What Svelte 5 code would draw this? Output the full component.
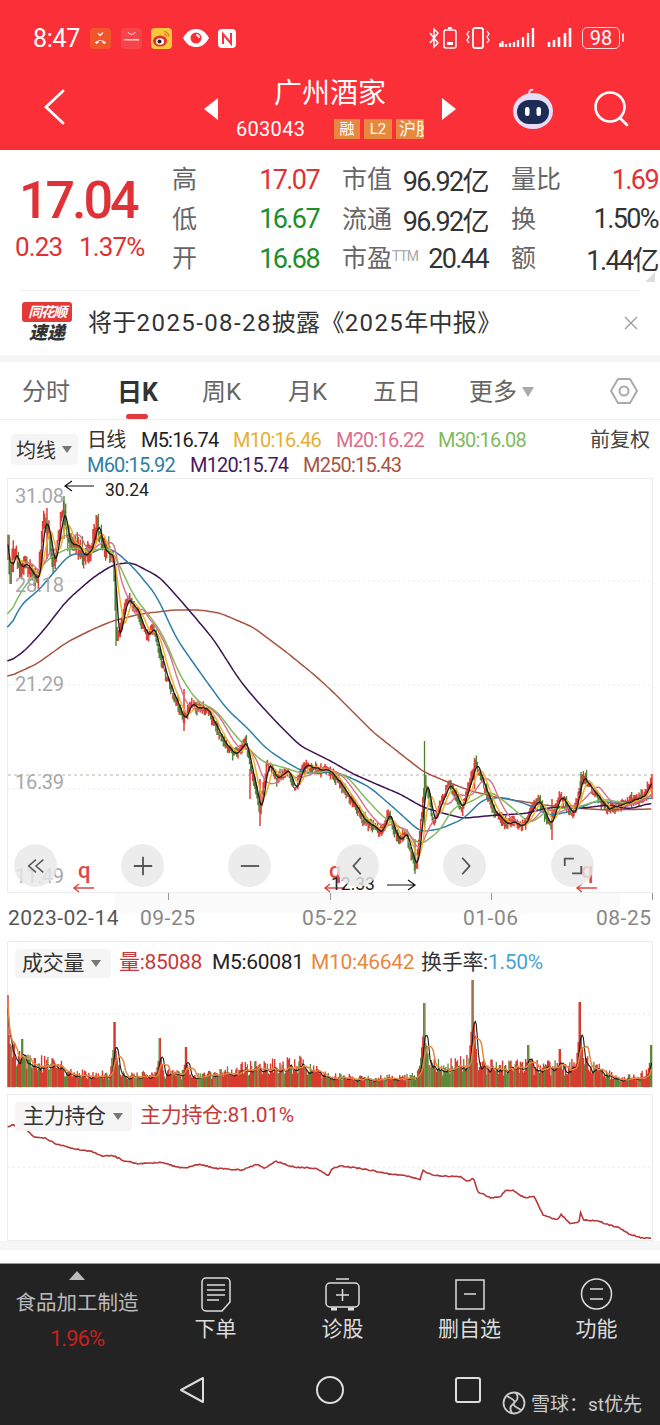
<script>
  // seeded random so the chart stays the same between runs
  let seed = 7321;
  const rnd = () => {
    seed = (seed * 16807) % 2147483647;
    return seed / 2147483647;
  };

  const z3 = pts => pts.map(([x, y]) => [x / 3, 480 + y / 3]);
  const z4 = pts => pts.map(([x, y]) => [330 + x / 3, 480 + y / 3]);
  const zs = pts => pts.map(([x, y]) => [x / 2.376, 930 + y / 3]);

  const interp = (keys, x) => {
    if (x <= keys[0][0]) return keys[0][1];
    for (let i = 1; i < keys.length; i++) {
      if (x <= keys[i][0]) {
        const [x0, y0] = keys[i - 1];
        const [x1, y1] = keys[i];
        return y0 + ((y1 - y0) * (x - x0)) / (x1 - x0 || 1);
      }
    }
    return keys[keys.length - 1][1];
  };

  const toPath = pts => 'M' + pts.map(p => p[0].toFixed(1) + ' ' + p[1].toFixed(1)).join('L');

  // resample and round off the corners of a hand-read line
  const smooth = (keys, win = 3) => {
    const raw = [];
    for (let x = keys[0][0]; x <= keys[keys.length - 1][0]; x += 2) raw.push([x, interp(keys, x)]);
    return toPath(raw.map((p, i) => {
      const part = raw.slice(Math.max(0, i - win), i + win + 1);
      return [p[0], part.reduce((s, q) => s + q[1], 0) / part.length];
    }));
  };

  const m250 = smooth([
    ...z3([[22,595],[110,555],[200,490],[280,450],[340,425],[420,405],[520,393],[600,393],[660,402],[760,445],[860,520],[940,585]]),
    ...z4([[0,630],[60,690],[130,760],[200,815],[280,878],[350,908],[420,935],[500,955],[580,968],[660,980],[750,988],[830,993],[968,990]])
  ]);
  const m120 = smooth([
    ...z3([[22,552],[75,515],[130,455],[200,365],[280,295],[340,257],[395,250],[480,295],[560,385],[640,480],[720,605],[770,665],[830,730],[900,800]]),
    ...z4([[0,845],[70,885],[150,920],[210,945],[280,985],[330,1000],[400,1018],[480,1010],[590,1003],[660,985],[750,988],[830,978],[900,990],[968,970]])
  ]);
  const m60 = smooth([
    ...z3([[22,465],[60,380],[120,330],[170,270],[210,225],[270,225],[310,205],[345,215],[400,265],[470,350],[530,480],[600,580],[680,690],[740,745],[800,810],[860,850],[910,878],[960,885]]),
    ...z4([[0,875],[60,895],[120,925],[190,985],[270,1058],[330,1050],[400,1020],[460,960],[520,955],[590,975],[660,1010],[730,995],[800,965],[880,975],[968,955]])
  ]);
  const m30 = smooth([
    ...z3([[22,425],[60,340],[110,280],[150,235],[210,205],[270,215],[330,205],[355,250],[400,350],[460,425],[490,470],[540,590],[590,665],[650,695],[710,775],[790,850],[850,865],[910,885]]),
    ...z4([[0,875],[50,890],[100,950],[160,1015],[220,1050],[270,1100],[330,1055],[370,985],[420,970],[480,935],[540,980],[600,1035],[660,990],[740,985],[820,960],[900,975],[968,945]])
  ]);

  const closeKeys = [
    ...z3([[22,170],[30,300],[40,215],[60,265],[75,250],[100,290],[115,300],[130,120],[145,150],[160,260],[190,90],[205,190],[230,200],[250,230],[270,220],[290,130],[310,210],[340,240],[350,490],[380,360],[410,400],[440,470],[460,450],[490,570],[520,650],[550,720],[570,680],[620,690],[660,770],[700,830],[735,790],[780,1000],[800,850],[830,900],[860,870],[885,930],[910,860],[960,870]]),
    ...z4([[0,880],[60,960],[100,1020],[150,1060],[175,1000],[205,1090],[225,1060],[258,1170],[285,900],[310,1030],[355,910],[395,990],[435,850],[490,1000],[520,1030],[580,1040],[620,960],[660,1040],[690,950],[730,1010],[755,890],[800,950],[830,990],[880,975],[940,950],[968,895]])
  ];

  const bars = [];
  for (let x = 8; x < 652; x += 1.05) {
    const wild = x < 110 ? 3 : 1.5;
    const c = interp(closeKeys, x) + (rnd() - 0.5) * 5;
    const prev = bars.length ? bars[bars.length - 1].c : c + 2;
    const o = prev + (rnd() - 0.5) * 3 * wild;
    const hi = Math.min(o, c) - rnd() * 4 * wild;
    const lo = Math.max(o, c) + rnd() * 4 * wild;
    bars.push({ x, c, o, hi, lo, up: c < o + 2.5 });
  }

  // the long shadows that stand out on the picture
  const spikes = [
    [424.5, 742, 830, false], [552, 800, 841, true], [260, 780, 827, true], [415, 840, 875, false],
    [474.5, 759, 790, true], [581, 773, 800, false], [64, 497, 540, false], [47, 509, 560, true],
    [116, 590, 647, false], [184, 690, 732, true], [250, 770, 800, true], [652, 775, 800, true]
  ];

  const candlePath = up => {
    let d = '';
    for (const b of bars) {
      if (b.up === up) d += `M${b.x.toFixed(1)} ${b.hi.toFixed(1)}V${b.lo.toFixed(1)}`;
    }
    for (const s of spikes) {
      if (s[3] === up) d += `M${s[0]} ${s[1]}V${s[2]}`;
    }
    return d;
  };
  const redCandles = candlePath(true);
  const greenCandles = candlePath(false);

  const movAvg = (vals, n) => bars.map((b, i) => {
    const part = vals.slice(Math.max(0, i - n + 1), i + 1);
    return [b.x, part.reduce((s, v) => s + v, 0) / part.length];
  });
  const ma5 = toPath(movAvg(bars.map(b => b.c), 5));
  const ma10 = toPath(movAvg(bars.map(b => b.c), 10));
  const ma20 = toPath(movAvg(bars.map(b => b.c), 20));

  // volume pane
  const volEnv = [[7,50],[20,30],[60,24],[70,17],[110,13],[115,22],[130,12],[160,17],[200,12],[240,21],[262,24],[300,26],[330,13],[380,10],[415,12],[424,40],[440,22],[470,30],[480,26],[500,22],[520,24],[570,22],[580,30],[600,19],[620,9],[640,13],[652,22]];
  const volPeaks = [[7.5,92],[114.5,65],[160,49],[424,84],[473,107],[580,85],[651,42],[22,48],[186,40],[528,42],[560,38]];
  const vols = bars.map(b => {
    let h = interp(volEnv, b.x) * (0.5 + rnd() * 0.7);
    for (const [px, ph] of volPeaks) {
      const d = Math.abs(b.x - px);
      if (d < 5) h = Math.max(h, ph * (d < 1 ? 1 : 0.75 - d * 0.12));
    }
    return h;
  });
  const volBars = bars.map((b, i) => ({
    x: b.x,
    h: vols[i],
    green: (b.x > 424 && b.x < 470 ? rnd() < 0.65 : rnd() < 0.22)
  }));
  const volPath = green => volBars.filter(v => v.green === green).map(v => `M${v.x.toFixed(1)} 1087V${(1087 - v.h).toFixed(1)}`).join('');
  const volRed = volPath(false);
  const volGreen = volPath(true);
  const volMa = n => toPath(movAvg(vols, n).map(p => [p[0], 1087 - p[1] * (n === 5 ? 0.85 : 0.9)]));
  const volM5 = volMa(5);
  const volM10 = volMa(10);

  // holdings line, read off the reference
  const holdKeys = zs([[18,590],[30,585],[60,595],[80,620],[110,625],[130,640],[170,655],[220,665],[240,677],[270,677],[290,690],[330,702],[385,697],[420,712],[445,713],[475,702],[510,715],[575,720],[610,703],[630,715],[655,693],[700,712],[750,714],[780,738],[790,715],[810,708],[860,716],[930,733],[960,737],[1000,748],[1003,720],[1030,737],[1095,740],[1110,755],[1125,745],[1135,785],[1165,803],[1190,800],[1200,780],[1220,782],[1245,803],[1270,800],[1290,855],[1325,870],[1332,853],[1355,880],[1375,878],[1380,845],[1385,870],[1420,872],[1440,882],[1470,893],[1495,912],[1530,925],[1548,923]]);
  const holdPts = [];
  for (let x = holdKeys[0][0]; x <= holdKeys[holdKeys.length - 1][0]; x += 1.5) {
    holdPts.push([x, interp(holdKeys, x) + (rnd() - 0.5) * 1.1]);
  }
  const holdPath = toPath(holdPts);

  const stats = [
    [{ l: '高', v: '17.07', c: 'red' }, { l: '市值', v: '96.92亿' }, { l: '量比', v: '1.69', c: 'red' }],
    [{ l: '低', v: '16.67', c: 'green' }, { l: '流通', v: '96.92亿' }, { l: '换', v: '1.50%' }],
    [{ l: '开', v: '16.68', c: 'green' }, { l: '市盈', ttm: true, v: '20.44' }, { l: '额', v: '1.44亿' }]
  ];
  const tabs = ['分时', '日K', '周K', '月K', '五日'];
  const priceLabels = [['31.08', 496], ['28.18', 585], ['21.29', 684], ['16.39', 782], ['11.49', 876]];
  const markers = [84, 335, 587];
</script>

<div class="page">
  <header class="top">
    <div class="status">
      <span class="clock">8:47</span>
      <svg class="appicon" viewBox="0 0 21 21"><rect width="21" height="21" rx="4" fill="#f2552c"/><path d="M5 14.500c3-3 8-3 11 0l-1.500 1.500-2-1.200v-1.500c-1.200-.3-2.800-.3-4 0v1.500l-2 1.200z" fill="#fff"/><path d="M8 5l2 2.500 3-3" fill="none" stroke="#fff" stroke-width="1.200"/></svg>
      <svg class="appicon" viewBox="0 0 21 21"><rect width="21" height="21" rx="4" fill="#f7434a"/><path d="M7 4c.5 3 6.500 3 7 0" fill="none" stroke="#fff" stroke-width=".8"/><rect x="3" y="11" width="15" height="1.600" fill="#fff" opacity=".7"/></svg>
      <svg class="appicon" viewBox="0 0 21 21"><rect width="21" height="21" rx="4" fill="#f9c73c"/><ellipse cx="9" cy="13" rx="7" ry="5.500" fill="#e5312d"/><ellipse cx="9" cy="13.500" rx="4" ry="3.300" fill="#fff"/><circle cx="8.500" cy="13.500" r="2" fill="#222"/><path d="M13 3.500a5 5 0 0 1 5 5M13 6a2.500 2.500 0 0 1 2.500 2.500" fill="none" stroke="#e5812d" stroke-width="1.400"/></svg>
      <svg class="eye" viewBox="0 0 28 20"><path d="M1 10C5 3 9 1 14 1s9 2 13 9c-4 7-8 9-13 9S5 17 1 10z" fill="#fff"/><circle cx="14" cy="10" r="5.500" fill="#fb2f38"/><path d="M14 6a4 4 0 0 1 4 4c-2 0-4-2-4-4z" fill="#fff"/></svg>
      <svg class="nfc" viewBox="0 0 20 21"><rect x="1" y="1" width="18" height="19" rx="4" fill="#fff"/><path d="M6 16V6l8 9.500V5" fill="none" stroke="#fb2f38" stroke-width="2"/></svg>
      <span class="spacer"></span>
      <svg class="st st1" viewBox="0 0 29 22"><path d="M1 6l8 10-4 4V2l4 4-8 10" fill="none" stroke="#fff" stroke-width="1.500"/><rect x="15" y="3" width="12" height="18" rx="2" fill="none" stroke="#fff" stroke-width="1.500"/><rect x="19" y="0" width="4" height="2" fill="#fff"/><rect x="18" y="15" width="6" height="3" fill="#fff"/></svg>
      <svg class="st st2" viewBox="0 0 25 22"><rect x="7" y="1" width="10" height="20" rx="2" fill="none" stroke="#fff" stroke-width="1.800"/><path d="M3 4l-2 3 2 3-2 3 2 3M21 4l2 3-2 3 2 3-2 3" fill="none" stroke="#fff" stroke-width="1.300"/></svg>
      <svg class="st st3" viewBox="0 0 36 22"><path d="M1 16v4M3.500 14v6M7 17v3M11 16v4M15 15v5M19 13v7M24 10v10M29 6v14M34 1v19" stroke="#fff" stroke-width="2.300" fill="none"/></svg>
      <svg class="st st4" viewBox="0 0 26 22"><path d="M2 15v5M7 13v7M12 10v10M18 6v14M23 1v19" stroke="#fff" stroke-width="2.600" fill="none"/></svg>
      <span class="batt"><span>98</span></span>
    </div>
    <div class="nav">
      <svg class="back" viewBox="0 0 22 36"><path d="M20 2L3 18l17 16" fill="none" stroke="#fff" stroke-width="2.800" stroke-linecap="round"/></svg>
      <span class="tri left"></span>
      <div class="titlebox">
        <div class="title">广州酒家</div>
        <div class="code">
          <span class="num">603043</span>
          <span class="badges"><i>融</i><i>L2</i><i>沪股</i></span>
        </div>
      </div>
      <span class="tri right"></span>
      <svg class="robot" viewBox="0 0 42 42">
        <path d="M18 7c-2-4 1-6 3-5" fill="none" stroke="#e9dcf5" stroke-width="2"/>
        <ellipse cx="21" cy="23" rx="20" ry="18" fill="#e6dcf7"/>
        <rect x="5" y="12" width="32" height="24" rx="12" fill="#1c2c55"/>
        <rect x="13" y="19" width="4.500" height="9" rx="2.200" fill="#fff"/>
        <rect x="24.500" y="19" width="4.500" height="9" rx="2.200" fill="#fff"/>
      </svg>
      <svg class="search" viewBox="0 0 36 36"><circle cx="17" cy="16" r="14.500" fill="none" stroke="#fff" stroke-width="2.600"/><path d="M27 27l7 7" stroke="#fff" stroke-width="2.800" stroke-linecap="round"/></svg>
    </div>
  </header>

  <section class="quote">
    <div class="price">
      <div class="big">17.04</div>
      <div class="chg"><span>0.23</span><span>1.37%</span></div>
    </div>
    <div class="stats">
      {#each stats as row}
        {#each row as s}
          <div class="cell">
            <span class="lab">{s.l}{#if s.ttm}<small>TTM</small>{/if}</span>
            <span class="val {s.c || ''}">{s.v}</span>
          </div>
        {/each}
      {/each}
    </div>
    <span class="corner"></span>
  </section>

  <section class="news">
    <div class="logo">
      <div class="logo-top">同花顺</div>
      <div class="logo-bot">速递</div>
    </div>
    <span class="news-text">将于<span class="date">2025-08-28</span>披露《<span class="date">2025</span>年中报》</span>
    <svg class="close" viewBox="0 0 14 14"><path d="M1 1l12 12M13 1L1 13" stroke="#999" stroke-width="1.300"/></svg>
  </section>
  <div class="band"></div>

  <nav class="tabs">
    {#each tabs as t, i}
      <span class="tab" class:active={i === 1}>{t}</span>
    {/each}
    <span class="tab more">更多<i></i></span>
    <svg class="hex" viewBox="0 0 28 28"><path d="M8 2h12l7 12-7 12H8L1 14z" fill="none" stroke="#aaa" stroke-width="2" stroke-linejoin="round"/><circle cx="14" cy="14" r="4.500" fill="none" stroke="#aaa" stroke-width="2"/></svg>
  </nav>

  <section class="legend">
    <div class="drop ma">均线<i></i></div>
    <div class="rows">
      <div class="row1">
        <span>日线</span>
        <span class="k">M5:16.74</span>
        <span class="m10">M10:16.46</span>
        <span class="m20">M20:16.22</span>
        <span class="m30">M30:16.08</span>
        <span class="fq">前复权</span>
      </div>
      <div class="row2">
        <span class="m60">M60:15.92</span>
        <span class="m120">M120:15.74</span>
        <span class="m250">M250:15.43</span>
      </div>
    </div>
  </section>

  <section class="chart">
    <svg class="plot" viewBox="0 479 660 415">
      <rect x="7.500" y="479.500" width="645" height="414" fill="#fff" stroke="#ececec"/>
      <path d="M8 582H652M8 686H652M8 790H652" stroke="#eaeaea" stroke-dasharray="2 3"/>
      <path d="M8 776H652" stroke="#b9b5a0" stroke-dasharray="3 3"/>
      <path d={redCandles} stroke="#de4037" stroke-width="1.500" fill="none"/>
      <path d={greenCandles} stroke="#4d7f33" stroke-width="1.300" fill="none"/>
      <path d={m250} stroke="#a85443" stroke-width="1.500" fill="none"/>
      <path d={m120} stroke="#3b1350" stroke-width="1.500" fill="none"/>
      <path d={m60} stroke="#2f7ea6" stroke-width="1.500" fill="none"/>
      <path d={m30} stroke="#7fbb5c" stroke-width="1.500" fill="none"/>
      <path d={ma20} stroke="#dd6c8a" stroke-width="1.400" fill="none"/>
      <path d={ma10} stroke="#efb02a" stroke-width="1.500" fill="none"/>
      <path d={ma5} stroke="#1a1a1a" stroke-width="1.300" fill="none"/>
      <path d="M94 487H65M72 482l-7 5 7 5" stroke="#111" stroke-width="1.200" fill="none"/>
      <path d="M387 886H415M408 881l7 5-7 5" stroke="#111" stroke-width="1.200" fill="none"/>
      {#each markers as m}
        <path d="M{m + 10} 889H{m - 10}M{m - 5} 885l-5 4 5 4" stroke="#dd4a44" stroke-width="1.500" fill="none"/>
      {/each}
    </svg>
    {#each priceLabels as [t, y]}
      <span class="plabel" style="top:{y - 479 - 12}px">{t}</span>
    {/each}
    {#each markers as m}
      <span class="q" style="left:{m - 6}px">q</span>
    {/each}
    <span class="note hi">30.24</span>
    <span class="note lo">12.33</span>
    <button class="round b1" aria-label="back"><svg viewBox="0 0 24 24"><path d="M12 5l-8 7 8 7M20 5l-8 7 8 7" fill="none" stroke="#555" stroke-width="1.600"/></svg></button>
    <button class="round b2" aria-label="zoom in"><svg viewBox="0 0 24 24"><path d="M2 12h20M12 2v20" stroke="#555" stroke-width="2"/></svg></button>
    <button class="round b3" aria-label="zoom out"><svg viewBox="0 0 24 24"><path d="M2 12h20" stroke="#555" stroke-width="2"/></svg></button>
    <button class="round b4" aria-label="left"><svg viewBox="0 0 24 24"><path d="M15 3l-8 9 8 9" fill="none" stroke="#555" stroke-width="2"/></svg></button>
    <button class="round b5" aria-label="right"><svg viewBox="0 0 24 24"><path d="M9 3l8 9-8 9" fill="none" stroke="#555" stroke-width="2"/></svg></button>
    <button class="round b6" aria-label="full"><svg viewBox="0 0 24 24"><path d="M13 4H3v8M11 20h10v-8" fill="none" stroke="#555" stroke-width="2"/></svg></button>
  </section>

  <div class="axis">
    <span class="smudge"></span>
    <i class="tick t1"></i><i class="tick t2"></i><i class="tick t3"></i><i class="tick t4"></i>
    <span class="first">2023-02-14</span><span>09-25</span><span>05-22</span><span>01-06</span><span>08-25</span>
  </div>

  <section class="pane vol">
    <svg class="plot" viewBox="0 941 660 147">
      <rect x="7.500" y="941.500" width="645" height="146" fill="#fff" stroke="#ececec"/>
      <path d="M8 1014H652" stroke="#e8e8e8" stroke-dasharray="2 3"/>
      <path d={volRed} stroke="#d93a2e" stroke-width="1.400" fill="none"/>
      <path d={volGreen} stroke="#5b8a3b" stroke-width="1.300" fill="none"/>
      <path d={volM5} stroke="#1a1a1a" stroke-width="1.100" fill="none"/>
      <path d={volM10} stroke="#e8873f" stroke-width="1.500" fill="none"/>
    </svg>
    <div class="pane-head">
      <div class="drop v">成交量<i></i></div>
      <span class="r1">量:85088</span>
      <span class="r2">M5:60081</span>
      <span class="r3">M10:46642</span>
      <span class="r4">换手率:<b>1.50%</b></span>
    </div>
  </section>

  <section class="pane hold">
    <svg class="plot" viewBox="0 1094 660 147">
      <rect x="7.500" y="1094.500" width="645" height="146" fill="#fff" stroke="#ececec"/>
      <path d="M8 1167H652" stroke="#e8e8e8" stroke-dasharray="2 3"/>
      <path d={holdPath} stroke="#b8393a" stroke-width="1.600" fill="none"/>
    </svg>
    <div class="pane-head">
      <div class="drop h">主力持仓<i></i></div>
      <span class="r5">主力持仓:81.01%</span>
    </div>
  </section>
  <div class="band2"></div>

  <footer class="bottom">
    <div class="tools">
      <div class="sector">
        <span class="up"></span>
        <span class="sname">食品加工制造</span>
        <span class="spct">1.96%</span>
      </div>
      <div class="tool">
        <svg width="30" height="35" viewBox="0 0 30 35"><path d="M5 1h20a4 4 0 0 1 4 4v20l-8 9H5a4 4 0 0 1-4-4V5a4 4 0 0 1 4-4z" fill="none" stroke="#ddd" stroke-width="1.500"/><path d="M6 8h18M6 13h18M6 18h18M6 23h12" stroke="#ddd" stroke-width="1.500"/></svg>
        <span>下单</span>
      </div>
      <div class="tool">
        <svg width="35" height="35" viewBox="0 0 35 35"><path d="M11 2h13" stroke="#ddd" stroke-width="1.500"/><rect x="1" y="6" width="33" height="24" rx="4" fill="none" stroke="#ddd" stroke-width="1.500"/><path d="M11 18h13M17.500 12v12" stroke="#ddd" stroke-width="1.500"/><path d="M6 32h6M23 32h6" stroke="#ddd" stroke-width="3"/></svg>
        <span>诊股</span>
      </div>
      <div class="tool">
        <svg width="30" height="35" viewBox="0 0 30 35"><rect x="1" y="3" width="28" height="29" fill="none" stroke="#ddd" stroke-width="1.500"/><path d="M9 17h12" stroke="#ddd" stroke-width="1.500"/></svg>
        <span>删自选</span>
      </div>
      <div class="tool">
        <svg width="33" height="35" viewBox="0 0 33 35"><circle cx="16.500" cy="17" r="15" fill="none" stroke="#ddd" stroke-width="1.500"/><path d="M10 12h13M10 22h13" stroke="#ddd" stroke-width="1.500"/></svg>
        <span>功能</span>
      </div>
    </div>
    <div class="sysnav">
      <svg width="26" height="28" viewBox="0 0 26 28"><path d="M24 2v24L2 14z" fill="none" stroke="#ddd" stroke-width="2" stroke-linejoin="round"/></svg>
      <svg width="28" height="28" viewBox="0 0 28 28"><ellipse cx="14" cy="14" rx="13" ry="13" fill="none" stroke="#ddd" stroke-width="2"/></svg>
      <svg width="26" height="26" viewBox="0 0 26 26"><rect x="1" y="1" width="24" height="24" rx="2" fill="none" stroke="#ddd" stroke-width="2"/></svg>
    </div>
    <div class="mark">
      <svg width="24" height="24" viewBox="0 0 24 24"><circle cx="12" cy="12" r="10.500" fill="none" stroke="#ccc" stroke-width="1.800"/><path d="M5 5c5 3 10 5 6 8s-3 6-1 9M19 19c-5-3-10-5-6-8s3-6 1-9" fill="none" stroke="#ccc" stroke-width="1.800"/></svg>
      <span>雪球：st优先</span>
    </div>
  </footer>
</div>

<style>
  :global(body) {
    margin: 0;
    background: #fff;
  }

  .page {
    position: relative;
    width: 660px;
    height: 1425px;
    overflow: hidden;
    background: #fff;
    color: #333;
    font-family: Roboto, "Noto Sans CJK SC", sans-serif;
  }

  .top {
    height: 150px;
    background: #fb2f38;
    color: #fff;
  }

  .status {
    display: flex;
    align-items: center;
    height: 76px;
    padding: 0 40px 0 33px;
    box-sizing: border-box;
  }
  .clock {
    width: 57px;
    font-size: 25px;
    letter-spacing: -0.3px;
  }
  .appicon {
    width: 21px;
    height: 21px;
    margin-right: 9.500px;
  }
  .eye {
    width: 28px;
    height: 20px;
    margin-right: 7px;
  }
  .nfc {
    width: 20px;
    height: 21px;
  }
  .spacer {
    flex: 1;
  }
  .st {
    height: 22px;
  }
  .st1 { width: 29px; margin-right: 8px; }
  .st2 { width: 25px; margin-right: 8px; }
  .st3 { width: 36px; margin-right: 12px; }
  .st4 { width: 26px; margin-right: 9px; }
  .batt {
    position: relative;
    display: flex;
    align-items: center;
    justify-content: center;
    width: 38px;
    height: 22px;
    box-sizing: border-box;
    border: 1.500px solid #ffd5d5;
    border-radius: 5px;
    font-size: 20px;
  }
  .batt::after {
    content: '';
    position: absolute;
    right: -5px;
    top: 5px;
    width: 2px;
    height: 9px;
    border-radius: 1px;
    background: #ffd5d5;
  }

  .nav {
    position: relative;
    display: flex;
    justify-content: center;
    height: 74px;
  }
  .back {
    position: absolute;
    left: 43px;
    top: 13px;
    width: 22px;
    height: 36px;
  }
  .tri {
    width: 0;
    height: 0;
    margin-top: 22px;
    border-top: 11px solid transparent;
    border-bottom: 11px solid transparent;
  }
  .tri.left {
    border-right: 14px solid #fff;
  }
  .tri.right {
    border-left: 14px solid #fff;
  }
  .titlebox {
    width: 224px;
  }
  .title {
    text-align: center;
    font-size: 28px;
    line-height: 36px;
  }
  .code {
    display: flex;
    align-items: center;
    height: 24px;
    margin-top: 5px;
    padding-left: 18px;
  }
  .num {
    width: 98px;
    font-size: 20px;
    letter-spacing: 0.3px;
    color: #fff;
  }
  .badges {
    display: flex;
    gap: 4px;
    width: 90px;
    overflow: hidden;
  }
  .badges i {
    flex: none;
    height: 20px;
    min-width: 26px;
    box-sizing: border-box;
    background: #e8883e;
    color: #fff;
    font-size: 15px;
    line-height: 20px;
    font-style: normal;
    text-align: center;
  }
  .badges i:nth-child(2) {
    min-width: 28px;
  }
  .badges i:last-child {
    min-width: 40px;
    font-size: 17px;
  }
  .robot {
    position: absolute;
    left: 512px;
    top: 12px;
    width: 42px;
    height: 42px;
  }
  .search {
    position: absolute;
    left: 593px;
    top: 15px;
    width: 36px;
    height: 36px;
  }

  .quote {
    position: relative;
    display: flex;
    height: 140px;
    box-sizing: border-box;
    padding-top: 10px;
  }
  .price {
    width: 172px;
    flex: none;
    padding-left: 15px;
    box-sizing: border-box;
    color: #e03136;
  }
  .big {
    padding-left: 4px;
    font-size: 52px;
    font-weight: 500;
    line-height: 62px;
    margin-top: 10px;
    letter-spacing: -3px;
  }
  .chg {
    display: flex;
    gap: 17px;
    font-size: 26px;
    line-height: 30px;
    letter-spacing: -0.900px;
  }
  .stats {
    display: grid;
    grid-template-columns: 147px 146px 147px;
    column-gap: 23px;
    grid-auto-rows: 39.500px;
    white-space: nowrap;
  }
  .cell {
    display: flex;
    justify-content: space-between;
    align-items: center;
  }
  .lab {
    margin-bottom: 5px;
    color: #666;
    font-size: 25px;
  }
  .lab small {
    font-size: 14px;
    color: #aaa;
    vertical-align: 6px;
    letter-spacing: -1px;
  }
  .val {
    color: #333;
    font-size: 27px;
    letter-spacing: -1.600px;
  }
  .val.red {
    color: #e03136;
  }
  .val.green {
    color: #1a8f2c;
  }
  .corner {
    position: absolute;
    right: 5px;
    bottom: 8px;
    width: 0;
    height: 0;
    border-left: 10px solid transparent;
    border-bottom: 10px solid #ddd;
  }

  .news {
    display: flex;
    align-items: center;
    height: 65px;
    box-sizing: border-box;
    margin: 0 20px;
    padding-left: 2px;
    border-top: 1px solid #f1f1f1;
  }
  .logo {
    width: 50px;
    margin-right: 16px;
    text-align: center;
  }
  .logo-top {
    background: #e23a37;
    color: #fff;
    border-radius: 3px;
    font-size: 14px;
    line-height: 20px;
    font-weight: 700;
    font-style: italic;
    letter-spacing: -1.500px;
  }
  .logo-bot {
    font-size: 18px;
    line-height: 22px;
    font-weight: 900;
    font-style: italic;
    color: #333;
  }
  .news-text {
    flex: 1;
    margin-bottom: 5px;
    font-size: 24px;
    color: #333;
    letter-spacing: 0.300px;
  }
  .date {
    letter-spacing: 1.400px;
  }
  .close {
    width: 14px;
    height: 14px;
    margin-right: 2px;
  }
  .band {
    height: 7px;
    background: #f6f6f6;
  }

  .tabs {
    position: relative;
    display: grid;
    grid-template-columns: 95px 85px 86px 85px 96px 100px;
    height: 58px;
    box-sizing: border-box;
    padding: 0 0 2px 22px;
    border-bottom: 1px solid #eee;
    align-items: center;
    font-size: 24px;
    color: #666;
    white-space: nowrap;
  }
  .tab.active {
    position: relative;
    font-weight: 700;
    font-size: 25px;
    color: #333;
  }
  .tab.active::after {
    content: '';
    position: absolute;
    left: 9px;
    bottom: -11px;
    width: 22px;
    height: 5px;
    border-radius: 3px;
    background: #e23a3a;
  }
  .more i {
    display: inline-block;
    width: 0;
    height: 0;
    margin-left: 5px;
    vertical-align: 3px;
    border-left: 6px solid transparent;
    border-right: 6px solid transparent;
    border-top: 10px solid #aaa;
  }
  .hex {
    position: absolute;
    left: 610px;
    top: 15px;
    width: 28px;
    height: 28px;
  }

  .legend {
    position: relative;
    height: 59px;
    font-size: 20px;
    white-space: nowrap;
  }
  .drop {
    display: flex;
    align-items: center;
    box-sizing: border-box;
    background: #f5f5f5;
    border-radius: 4px;
    color: #333;
  }
  .drop i {
    width: 0;
    height: 0;
    border-left: 5px solid transparent;
    border-right: 5px solid transparent;
    border-top: 7px solid #777;
  }
  .ma {
    position: absolute;
    left: 11px;
    top: 14px;
    width: 67px;
    height: 31px;
    padding-left: 5px;
    gap: 6px;
  }
  .rows {
    margin-left: 87px;
    padding-top: 8px;
    line-height: 25px;
    letter-spacing: -0.800px;
  }
  .row1 {
    display: grid;
    grid-template-columns: 54px 92px 103px 102px 152px auto;
  }
  .row2 {
    display: grid;
    grid-template-columns: 103px 113px auto;
  }
  .k { color: #222; }
  .m10 { color: #e5b030; }
  .m20 { color: #dd6c8a; }
  .m30 { color: #7fbb5c; }
  .m60 { color: #2f7ea6; }
  .m120 { color: #4a1a60; }
  .m250 { color: #a85443; }
  .fq { color: #444; letter-spacing: 0; }

  .chart {
    position: relative;
    height: 415px;
    margin-top: -1px;
  }
  .plot {
    display: block;
    width: 660px;
    height: 100%;
  }
  .plabel {
    position: absolute;
    left: 15px;
    font-size: 20px;
    line-height: 26px;
    letter-spacing: -0.300px;
    color: #a8a8a8;
  }
  .q {
    position: absolute;
    top: 381px;
    font-size: 22px;
    line-height: 24px;
    font-weight: 500;
    color: #dd4a44;
  }
  .note {
    position: absolute;
    font-size: 17.500px;
    line-height: 22px;
    color: #222;
  }
  .note.hi {
    left: 105px;
    top: 1px;
  }
  .note.lo {
    left: 331px;
    top: 395px;
  }
  .round {
    position: absolute;
    top: 366px;
    width: 43px;
    height: 43px;
    padding: 0;
    border: 0;
    border-radius: 50%;
    background: rgba(232, 232, 232, 0.82);
  }
  .round svg {
    display: block;
    width: 22px;
    height: 22px;
    margin: auto;
  }
  .b1 { left: 14px; }
  .b2 { left: 121px; }
  .b3 { left: 228px; }
  .b4 { left: 336px; }
  .b5 { left: 443px; }
  .b6 { left: 551px; }

  .axis {
    position: relative;
    display: grid;
    grid-template-columns: 132px 162px 161px 133px 64px;
    height: 48px;
    box-sizing: border-box;
    padding: 10px 0 0 8px;
    font-size: 21px;
    line-height: 30px;
    color: #888;
    letter-spacing: 0.500px;
  }
  .first {
    color: #555;
  }
  .smudge {
    position: absolute;
    left: 115px;
    top: 0;
    width: 505px;
    height: 20px;
    background: #fafafa;
  }
  .axis span:not(.smudge) {
    position: relative;
  }
  .tick {
    position: absolute;
    top: 0;
    width: 1px;
    height: 7px;
    background: #999;
  }
  .t1 { left: 168px; }
  .t2 { left: 330px; }
  .t3 { left: 491px; }
  .t4 { left: 652px; }

  .pane {
    position: relative;
    height: 147px;
  }
  .hold {
    margin-top: 6px;
  }
  .pane-head {
    position: absolute;
    left: 15px;
    top: 7px;
    display: flex;
    align-items: center;
    font-size: 21px;
    line-height: 28px;
    white-space: nowrap;
    letter-spacing: -0.300px;
  }
  .v {
    width: 96px;
    height: 29px;
    padding-left: 7px;
    gap: 7px;
  }
  .h {
    width: 117px;
    height: 29px;
    padding-left: 8px;
    gap: 7px;
  }
  .pane-head span {
    margin-bottom: 2px;
  }
  .r1 { margin-left: 8px; width: 93px; color: #c8383a; }
  .r2 { width: 99px; color: #222; }
  .r3 { width: 110px; color: #e8873f; }
  .r4 { color: #333; }
  .r4 b { font-weight: 400; color: #4aa3cf; }
  .r5 { margin-left: 8px; color: #c8383a; }

  .band2 {
    height: 9px;
    background: #f6f6f6;
  }

  .bottom {
    position: relative;
    margin-top: 13px;
    height: 162px;
    box-sizing: border-box;
    border-top: 1px solid #999;
    background: #232323;
    color: #ddd;
  }
  .tools {
    display: grid;
    grid-template-columns: 152px repeat(4, 127px);
    height: 104px;
  }
  .sector {
    display: flex;
    flex-direction: column;
    align-items: center;
    padding-left: 2px;
  }
  .up {
    width: 0;
    height: 0;
    margin-top: 7px;
    border-left: 8px solid transparent;
    border-right: 8px solid transparent;
    border-bottom: 9px solid #bbb;
  }
  .sname {
    margin-top: 8px;
    font-size: 20.500px;
    line-height: 30px;
    color: #bbb;
    white-space: nowrap;
  }
  .spct {
    margin-top: 6px;
    font-size: 22px;
    line-height: 30px;
    letter-spacing: -1px;
    color: #c81e1e;
  }
  .tool {
    display: flex;
    flex-direction: column;
    align-items: center;
    padding-top: 13px;
    font-size: 21px;
    line-height: 30px;
    color: #ddd;
  }
  .tool svg {
    display: block;
    margin-bottom: 2px;
  }
  .sysnav {
    display: grid;
    grid-template-columns: repeat(3, 138px);
    justify-items: center;
    align-items: center;
    margin-left: 123px;
    height: 44px;
  }
  .mark {
    position: absolute;
    left: 502px;
    top: 125px;
    display: flex;
    align-items: center;
    gap: 5px;
    font-size: 19px;
    color: #ccc;
    white-space: nowrap;
  }
</style>
